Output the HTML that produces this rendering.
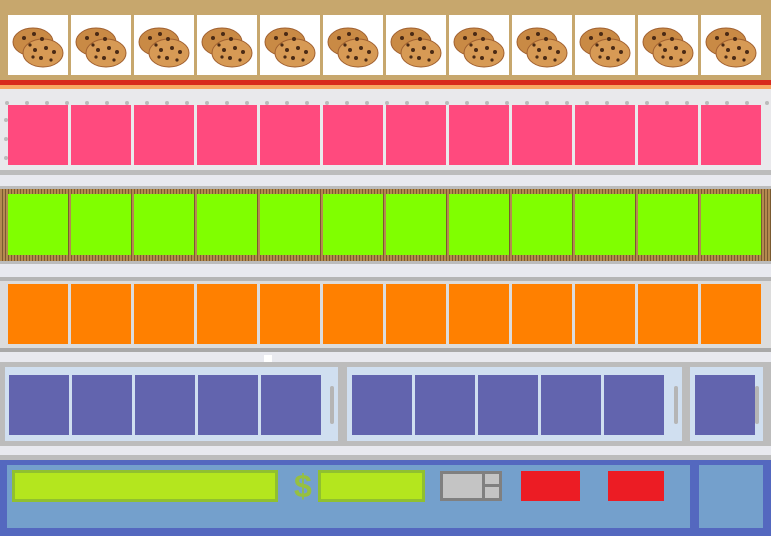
<!DOCTYPE html><html><head><style>
body{margin:0;width:771px;height:536px;position:relative;overflow:hidden;background:#e8e9ef;font-family:"Liberation Sans",sans-serif}
.a{position:absolute}
.t{position:absolute;width:60px;height:60px}
</style></head><body>
<div class="a" style="left:0;top:0;width:771px;height:80px;background:#c7a76d"></div>
<div class="a" style="left:0;top:80px;width:771px;height:5px;background:#d8291d"></div>
<div class="a" style="left:0;top:85px;width:771px;height:4px;background:#f7a763"></div>
<div class="a" style="left:0;top:89px;width:771px;height:81px;background:#e9e9ec"></div>
<div class="a" style="left:0;top:170px;width:771px;height:5px;background:#bcbcbc"></div>
<div class="a" style="left:0;top:186px;width:771px;height:3px;background:#bcbcbc"></div>
<div class="a" style="left:0;top:189px;width:771px;height:72px;background:repeating-linear-gradient(90deg,#b48a50 0 2px,#7a5a30 2px 3px),#a57a45"></div>
<div class="a" style="left:0;top:261px;width:771px;height:3px;background:#bcbcbc"></div>
<div class="a" style="left:0;top:277px;width:771px;height:71px;background:#dcdcdc;border-top:4px solid #b5b5b5;box-sizing:border-box"></div>
<div class="a" style="left:0;top:348px;width:771px;height:4px;background:#a9a9a9"></div>
<div class="a" style="left:264px;top:355px;width:8px;height:8px;background:#fff"></div>
<div class="a" style="left:0;top:362px;width:771px;height:84px;background:#bcbcbc"></div>
<div class="a" style="left:5px;top:367px;width:333px;height:74px;background:#d0dff0"></div>
<div class="a" style="left:347px;top:367px;width:335px;height:74px;background:#d0dff0"></div>
<div class="a" style="left:690px;top:367px;width:73px;height:74px;background:#d0dff0"></div>
<div class="a" style="left:330px;top:386px;width:4px;height:38px;background:#b5b5b5;border-radius:2px"></div>
<div class="a" style="left:674px;top:386px;width:4px;height:38px;background:#b5b5b5;border-radius:2px"></div>
<div class="a" style="left:755px;top:386px;width:4px;height:38px;background:#b5b5b5;border-radius:2px"></div>
<div class="a" style="left:0;top:446px;width:771px;height:9px;background:#e8e9ef"></div>
<div class="a" style="left:0;top:455px;width:771px;height:5px;background:#bcbcbc"></div>
<div class="a" style="left:0;top:460px;width:771px;height:76px;background:#5468bf"></div>
<div class="a" style="left:7px;top:465px;width:683px;height:63px;background:#74a0cc"></div>
<div class="a" style="left:699px;top:465px;width:64px;height:63px;background:#74a0cc"></div>
<div class="a" style="left:12px;top:470px;width:266px;height:32px;background:#b4e61e;border:3px solid #90c030;box-sizing:border-box"></div>
<div class="a" style="left:294px;top:468px;font-size:32px;font-weight:bold;color:#96c040">$</div>
<div class="a" style="left:318px;top:470px;width:107px;height:32px;background:#b4e61e;border:3px solid #90c030;box-sizing:border-box"></div>
<div class="a" style="left:440px;top:471px;width:62px;height:30px;background:#c4c4c4;border:3px solid #808080;box-sizing:border-box"></div>
<div class="a" style="left:482px;top:471px;width:3px;height:30px;background:#808080"></div>
<div class="a" style="left:482px;top:484px;width:20px;height:3px;background:#808080"></div>
<div class="a" style="left:521px;top:471px;width:59px;height:30px;background:#ec1c24"></div>
<div class="a" style="left:608px;top:471px;width:56px;height:30px;background:#ec1c24"></div>
<div id="g"></div>
<script>
var h='';
var cookie='<svg width="60" height="60" viewBox="0 0 60 60"><ellipse cx="25" cy="27" rx="20" ry="14" fill="#c98a45" stroke="#a06030"/><ellipse cx="35" cy="38" rx="20" ry="14" fill="#d79a55" stroke="#a06030"/><g fill="#4a2a15"><circle cx="16" cy="23" r="2"/><circle cx="26" cy="19" r="2"/><circle cx="34" cy="24" r="2"/><circle cx="22" cy="30" r="1.6"/><circle cx="27" cy="35" r="2"/><circle cx="38" cy="33" r="2"/><circle cx="46" cy="37" r="2"/><circle cx="33" cy="43" r="2"/><circle cx="43" cy="45" r="1.6"/><circle cx="25" cy="42" r="1.6"/></g></svg>';
for(var i=0;i<12;i++){var x=8+i*63;
h+='<div class="t" style="left:'+x+'px;top:15px;background:#fff">'+cookie+'</div>';
h+='<div class="t" style="left:'+x+'px;top:105px;background:#ff4a7e"></div>';
h+='<div class="t" style="left:'+x+'px;top:194px;background:#80ff00;height:61px"></div>';
h+='<div class="t" style="left:'+x+'px;top:284px;background:#ff8000"></div>';}
for(var i=0;i<5;i++){h+='<div class="t" style="left:'+(9+i*63)+'px;top:375px;background:#6264ae"></div>';h+='<div class="t" style="left:'+(352+i*63)+'px;top:375px;background:#6264ae"></div>';}
h+='<div class="t" style="left:695px;top:375px;background:#6264ae"></div>';
for(var i=0;i<39;i++)h+='<div class="a" style="left:'+(5+i*20)+'px;top:101px;width:4px;height:4px;border-radius:2px;background:#bbb"></div>';
for(var j=0;j<3;j++)h+='<div class="a" style="left:4px;top:'+(118+j*19)+'px;width:4px;height:4px;border-radius:2px;background:#bbb"></div>';
document.getElementById('g').innerHTML=h;
</script>
</body></html>
